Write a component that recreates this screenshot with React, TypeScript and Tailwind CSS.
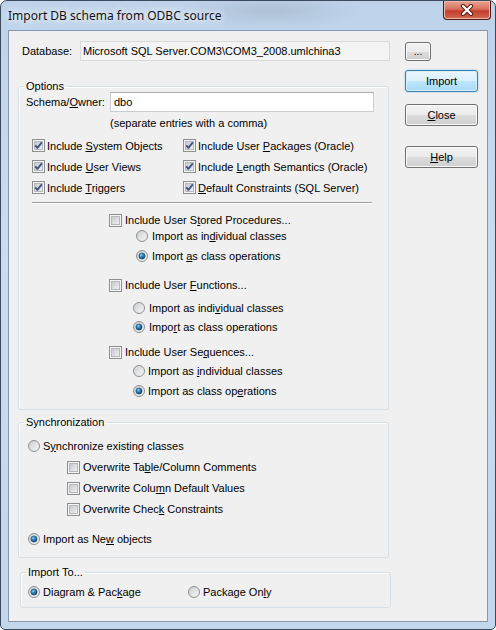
import React from "react";

function Check({ checked = false }: { checked?: boolean }) {
  return (
    <svg width="13" height="13" viewBox="0 0 13 13" className="shrink-0">
      <defs>
        <linearGradient id="cbFill" x1="0" y1="0" x2="1" y2="1">
          <stop offset="0" stopColor="#c4c7cc" />
          <stop offset="1" stopColor="#f2f2f3" />
        </linearGradient>
      </defs>
      <rect x="0.5" y="0.5" width="12" height="12" fill="#f4f4f4" stroke="#8e8f8f" />
      <rect x="2.5" y="2.5" width="8" height="8" fill="url(#cbFill)" stroke="#b5b9be" />
      {checked && (
        <path d="M3.2 6.4 L5.4 8.9 L9.8 3.4" fill="none" stroke="#3f5585" strokeWidth="1.9" strokeLinejoin="round" />
      )}
    </svg>
  );
}

function Radio({ checked = false }: { checked?: boolean }) {
  return (
    <svg width="12" height="12" viewBox="0 0 12 12" className="shrink-0">
      <defs>
        <linearGradient id="rbFill" x1="0" y1="0" x2="1" y2="1">
          <stop offset="0" stopColor="#c9cbce" />
          <stop offset="1" stopColor="#fafafa" />
        </linearGradient>
        <radialGradient id="rbDot" cx="0.38" cy="0.35" r="0.7">
          <stop offset="0" stopColor="#8fd0f4" />
          <stop offset="0.45" stopColor="#2f7fb8" />
          <stop offset="1" stopColor="#0c3a66" />
        </radialGradient>
      </defs>
      <circle cx="6" cy="6" r="5.5" fill="url(#rbFill)" stroke="#8e8f8f" />
      {checked && <circle cx="6" cy="6" r="3.1" fill="url(#rbDot)" stroke="#1b4a75" strokeWidth="0.6" />}
    </svg>
  );
}

function Group({ title, className, children }: { title: string; className: string; children: React.ReactNode }) {
  return (
    <fieldset className={`border border-[#d5dfe5] rounded-[3px] shadow-[inset_1px_1px_0_#fff] ${className}`}>
      <legend className="ml-[5px] px-[2px] leading-[12px]">{title}</legend>
      {children}
    </fieldset>
  );
}

const btn =
  "flex items-center justify-center rounded-[3px] border border-[#707070] bg-[linear-gradient(#f2f2f2,#ebebeb_50%,#dddddd_50%,#cfcfcf)] shadow-[inset_0_0_0_1px_#fbfbfb]";

export default function App() {
  return (
    <div className="w-[496px] h-[630px] flex flex-col rounded-t-[7px] rounded-b-[5px] border border-[#3b4a5c] bg-[radial-gradient(ellipse_90px_18px_at_270px_10px,#adc0d6,transparent),linear-gradient(#bed3ea,#cadcef_40%,#c2d6ec)] font-['Liberation_Sans',Arial,sans-serif] text-[11px] leading-[14px] text-black">
      {/* Title bar */}
      <div className="h-[29px] flex items-start justify-between">
        <div className="ml-[7px] mt-[7px] font-['Noto_Sans',sans-serif] text-[12px] leading-[16px] text-[#111] [text-shadow:0_0_6px_#fff,0_0_10px_#fff]">
          Import DB schema from ODBC source
        </div>
        <div className="mr-[4px] w-[48px] h-[19px] rounded-b-[4px] border border-t-0 border-[#4a1a16] bg-[linear-gradient(#e8a493,#d8715f_45%,#c33e2c_55%,#d16a55)] shadow-[inset_0_0_0_1px_#f0b8a8] flex items-center justify-center">
          <svg width="14" height="12" viewBox="0 0 14 12">
            <path d="M3 2 L11 10 M11 2 L3 10" stroke="#5a1e17" strokeWidth="4.2" strokeLinecap="round" />
            <path d="M3 2 L11 10 M11 2 L3 10" stroke="#ffffff" strokeWidth="2.2" strokeLinecap="round" />
          </svg>
        </div>
      </div>

      {/* Client area */}
      <div className="flex-1 mx-[7px] mb-[7px] border border-[#8498b2] bg-[#f0f0f0] flex">
        {/* Left column */}
        <div className="ml-[9px] w-[372px] flex flex-col">
          <div className="mt-[10px] h-[20px] flex items-center">
            <span className="pl-[4px] w-[62px]">Database:</span>
            <div className="flex-1 h-[20px] border border-[#d9d9d9] bg-[#f4f4f4] pl-[2px] flex items-center">
              Microsoft SQL Server.COM3\COM3_2008.umlchina3
            </div>
          </div>

          <Group title="Options" className="mt-[19px] w-[371px] h-[330px]">
            <div className="flex items-center h-[20px]">
              <span className="pl-[7px] w-[91px]">
                Schema/<u>O</u>wner:
              </span>
              <div className="w-[264px] h-[20px] border border-[#c9ccd3] border-t-[#abadb3] bg-white pl-[3px] flex items-center">dbo</div>
            </div>
            <div className="mt-[4px] pl-[91px]">(separate entries with a comma)</div>

            <div className="mt-[5px] pl-[13px] grid grid-cols-[151px_1fr]">
              {[
                [<>Include <u>S</u>ystem Objects</>, <>Include User <u>P</u>ackages (Oracle)</>],
                [<>Include <u>U</u>ser Views</>, <>Include <u>L</u>ength Semantics (Oracle)</>],
                [<>Include <u>T</u>riggers</>, <><u>D</u>efault Constraints (SQL Server)</>],
              ].map((row, i) => (
                <React.Fragment key={i}>
                  {row.map((label, j) => (
                    <div key={j} className="h-[21px] flex items-center gap-[2px]">
                      <Check checked />
                      <span>{label}</span>
                    </div>
                  ))}
                </React.Fragment>
              ))}
            </div>

            <div className="mt-[4px] ml-[13px] w-[340px] h-[2px] border-t border-t-[#a0a0a0] border-b border-b-white" />

            <div className="mt-[8px] pl-[90px] h-[16px] flex items-center gap-[3px]">
              <Check />
              <span>
                Include User S<u>t</u>ored Procedures...
              </span>
            </div>
            <div className="pl-[117px] h-[16px] flex items-center gap-[4px]">
              <Radio />
              <span>
                Import as in<u>d</u>ividual classes
              </span>
            </div>
            <div className="mt-[4px] pl-[117px] h-[16px] flex items-center gap-[4px]">
              <Radio checked />
              <span>
                Import <u>a</u>s class operations
              </span>
            </div>

            <div className="mt-[13px] pl-[90px] h-[16px] flex items-center gap-[3px]">
              <Check />
              <span>
                Include User <u>F</u>unctions...
              </span>
            </div>
            <div className="mt-[7px] pl-[114px] h-[16px] flex items-center gap-[4px]">
              <Radio />
              <span>
                Import as indi<u>v</u>idual classes
              </span>
            </div>
            <div className="mt-[3px] pl-[114px] h-[16px] flex items-center gap-[4px]">
              <Radio checked />
              <span>
                Impo<u>r</u>t as class operations
              </span>
            </div>

            <div className="mt-[9px] pl-[90px] h-[16px] flex items-center gap-[3px]">
              <Check />
              <span>
                Include User Se<u>q</u>uences...
              </span>
            </div>
            <div className="mt-[3px] pl-[114px] h-[16px] flex items-center gap-[3px]">
              <Radio />
              <span>
                Import as <u>i</u>ndividual classes
              </span>
            </div>
            <div className="mt-[4px] pl-[114px] h-[16px] flex items-center gap-[3px]">
              <Radio checked />
              <span>
                Import as class op<u>e</u>rations
              </span>
            </div>
          </Group>

          <Group title="Synchronization" className="mt-[6px] w-[371px] h-[142px]">
            <div className="mt-[10px] pl-[9px] h-[16px] flex items-center gap-[3px]">
              <Radio />
              <span>
                S<u>y</u>nchronize existing classes
              </span>
            </div>
            {[
              <>Overwrite Ta<u>b</u>le/Column Comments</>,
              <>Overwrite Colu<u>m</u>n Default Values</>,
              <>Overwrite Chec<u>k</u> Constraints</>,
            ].map((label, i) => (
              <div key={i} className="mt-[5px] pl-[48px] h-[16px] flex items-center gap-[3px]">
                <Check />
                <span>{label}</span>
              </div>
            ))}
            <div className="mt-[14px] pl-[9px] h-[16px] flex items-center gap-[3px]">
              <Radio checked />
              <span>
                Import as Ne<u>w</u> objects
              </span>
            </div>
          </Group>

          <Group title="Import To..." className="mt-[8px] ml-[2px] w-[371px] h-[42px]">
            <div className="mt-[6px] pl-[7px] h-[16px] flex items-center">
              <div className="w-[160px] flex items-center gap-[3px]">
                <Radio checked />
                <span>
                  Diagram &amp; Pac<u>k</u>age
                </span>
              </div>
              <div className="flex items-center gap-[3px]">
                <Radio />
                <span>
                  Package On<u>l</u>y
                </span>
              </div>
            </div>
          </Group>
        </div>

        {/* Right column: buttons */}
        <div className="ml-[15px] w-[73px] flex flex-col">
          <div className={`${btn} mt-[11px] w-[26px] h-[19px] text-[10px] leading-[10px]`}>...</div>
          <div className="mt-[9px] h-[22px] flex items-center justify-center rounded-[3px] border border-[#3c7fb1] bg-[linear-gradient(#eaf6fd,#d9f0fc_50%,#bee6fd_50%,#a7d9f5)] shadow-[inset_0_0_0_1px_#d8eefb,0_0_2px_#7ec4ea]">
            Import
          </div>
          <div className={`${btn} mt-[12px] h-[22px]`}>
            <span>
              <u>C</u>lose
            </span>
          </div>
          <div className={`${btn} mt-[20px] h-[22px]`}>
            <span>
              <u>H</u>elp
            </span>
          </div>
        </div>
      </div>
    </div>
  );
}
